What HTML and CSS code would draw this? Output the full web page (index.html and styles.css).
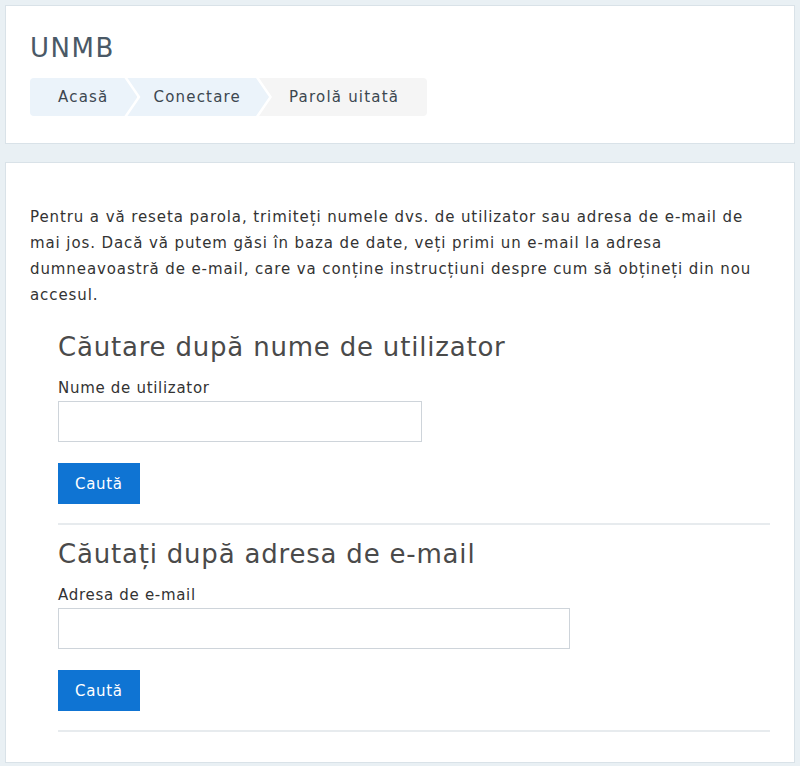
FILE: index.html
```html
<!DOCTYPE html>
<html lang="ro">

<head>
    <meta charset="UTF-8">
    <meta name="viewport" content="width=device-width, initial-scale=1.0">
    <title>UNMB: Parolă uitată</title>
    <link rel="stylesheet" href="styles.css">
</head>

<body>
    <div class="page">
        <header class="card page-header">
            <h1 class="site-name">UNMB</h1>
            <nav class="crumbs">
                <a class="crumb first" href="#">Acasă</a>
                <a class="crumb" href="#">Conectare</a>
                <span class="crumb last">Parolă uitată</span>
            </nav>
        </header>

        <main class="card content">
            <p class="intro">Pentru a vă reseta parola, trimiteți numele dvs. de utilizator sau adresa de e-mail de mai jos. Dacă vă putem găsi în baza de date, veți primi un e-mail la adresa dumneavoastră de e-mail, care va conține instrucțiuni despre cum să obțineți din nou accesul.</p>

            <form class="search-form">
                <h3 class="form-title">Căutare după nume de utilizator</h3>
                <label class="field-label" for="username">Nume de utilizator</label>
                <input class="field short" type="text" id="username">
                <button class="btn" type="button">Caută</button>
                <hr class="divider">
            </form>

            <form class="search-form">
                <h3 class="form-title">Căutați după adresa de e-mail</h3>
                <label class="field-label" for="email">Adresa de e-mail</label>
                <input class="field long" type="text" id="email">
                <button class="btn" type="button">Caută</button>
                <hr class="divider">
            </form>
        </main>
    </div>
</body>

</html>
```

FILE: styles.css
```css
body, html {
    margin: 0;
    padding: 0;
    background-color: #e9f0f4;
    font-family: "DejaVu Sans", "Open Sans", sans-serif;
    color: #343a40;
    letter-spacing: 0.7px;
}

.page {
    padding: 5px;
    display: flex;
    flex-direction: column;
    gap: 18px;
}

.card {
    background: #fff;
    border: 1px solid #d9e2e8;
}

/* Header */
.page-header {
    padding: 24px 24px 27px 24px;
}

.site-name {
    margin: 0 0 12px 0;
    font-size: 26px;
    font-weight: 400;
    line-height: 36px;
    color: #4a5966;
    letter-spacing: 1.5px;
}

.crumbs {
    display: flex;
    height: 38px;
}

.crumb {
    display: flex;
    align-items: center;
    padding: 0 28px 0 26px;
    margin-left: -10px;
    font-size: 15px;
    letter-spacing: 1.2px;
    color: #3c4750;
    text-decoration: none;
    background: #ebf3fa;
    clip-path: polygon(0 0, calc(100% - 13px) 0, 100% 50%, calc(100% - 13px) 100%, 0 100%, 13px 50%);
}

.crumb.first {
    margin-left: 0;
    padding-left: 28px;
    padding-right: 29px;
    border-radius: 4px 0 0 4px;
    clip-path: polygon(0 0, calc(100% - 13px) 0, 100% 50%, calc(100% - 13px) 100%, 0 100%);
}

.crumb.last {
    background: #f5f5f5;
    padding-left: 30px;
    padding-right: 28px;
    border-radius: 0 4px 4px 0;
    clip-path: polygon(0 0, 100% 0, 100% 100%, 0 100%, 13px 50%);
}

/* Content */
.content {
    padding: 41px 24px 16px 24px;
}

.intro {
    margin: 0 0 24px 0;
    font-size: 15px;
    line-height: 26px;
    letter-spacing: 0.9px;
    color: #333;
}

.search-form {
    display: flex;
    flex-direction: column;
    align-items: flex-start;
    padding: 0 0 0 28px;
    margin-bottom: 14px;
}

.form-title {
    margin: 0 0 14px 0;
    font-size: 26px;
    font-weight: 400;
    line-height: 31px;
    color: #4a4a4a;
    letter-spacing: 0.8px;
}

.field-label {
    font-size: 15px;
    line-height: 22px;
    margin-bottom: 2px;
    color: #333;
}

.field {
    box-sizing: border-box;
    height: 41px;
    border: 1px solid #ced4da;
    background: #fff;
    margin: 0 0 21px 0;
}

.field.short {
    width: 364px;
}

.field.long {
    width: 512px;
}

.btn {
    height: 41px;
    padding: 0 17px;
    border: none;
    background: #0f74d3;
    color: #fff;
    font-family: inherit;
    font-size: 15px;
    letter-spacing: inherit;
    cursor: pointer;
    margin-bottom: 19px;
}

.divider {
    align-self: stretch;
    margin: 0;
    border: none;
    border-top: 2px solid #e7ebee;
}
```
